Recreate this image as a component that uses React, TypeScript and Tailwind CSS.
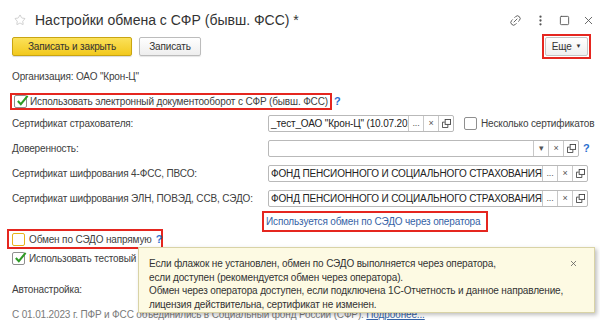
import React from "react";
import { Star, Link2, EllipsisVertical, Square, X } from "lucide-react";

const font = { fontFamily: '"Liberation Sans", Arial, sans-serif' };

const Check = ({ checked, focus }: { checked?: boolean; focus?: boolean }) => (
  <span
    className={`relative inline-flex h-[13px] w-[13px] shrink-0 items-center justify-center rounded-[2px] border bg-white ${
      focus ? "border-[#e8b21a]" : "border-[#8f8f8f]"
    }`}
  >
    {checked && (
      <svg viewBox="0 0 14 14" className="absolute -top-[2px] left-[1px] h-[13px] w-[13px]">
        <path d="M2 7.5 L5.2 11 L12.5 2" fill="none" stroke="#2e9b25" strokeWidth="2.2" />
      </svg>
    )}
  </span>
);

const OpenIcon = () => (
  <svg viewBox="0 0 10 10" className="h-[9px] w-[9px]">
    <rect x="3.5" y="0.5" width="6" height="5.5" fill="none" stroke="#444" strokeWidth="1" />
    <path d="M0.5 3.5 H3 M0.5 3.5 V9.5 H6.5 V6.5" fill="none" stroke="#444" strokeWidth="1" />
  </svg>
);

const FieldBtn = ({ children }: { children: React.ReactNode }) => (
  <span className="flex h-full w-[15px] shrink-0 items-center justify-center border-l border-[#c8c8c8] text-[9px] text-[#555]">
    {children}
  </span>
);

const Field = ({
  value,
  width,
  kind,
}: {
  value: string;
  width: string;
  kind: "pick" | "drop";
}) => (
  <div className="flex h-[17px] shrink-0 items-stretch overflow-hidden rounded-[2px] border border-[#b9b9b9] bg-white">
    <span className={`${width} shrink-0 overflow-hidden whitespace-nowrap px-[2px] text-[10px] leading-[15px] text-[#222]`}>
      {value}
    </span>
    <FieldBtn>{kind === "pick" ? "..." : "▾"}</FieldBtn>
    <FieldBtn>×</FieldBtn>
    <FieldBtn>
      <OpenIcon />
    </FieldBtn>
  </div>
);

const Help = () => <span className="text-[11px] font-bold text-[#2a6fcf]">?</span>;

export default function App() {
  return (
    <div
      className="relative h-[328px] w-[600px] overflow-hidden bg-white text-[10px] tracking-[-0.15px] text-[#404040]"
      style={font}
    >
      {/* header */}
      <div className="flex h-[37px] items-center pt-[3px]">
        <Star className="ml-[14px] h-[12px] w-[12px] text-[#b8b8b8]" strokeWidth={1.3} />
        <span className="ml-[9px] whitespace-nowrap text-[14px] tracking-normal text-[#333]">
          Настройки обмена с СФР (бывш. ФСС) *
        </span>
        <div className="ml-auto mr-[5px] flex items-center gap-[12px] text-[#555]">
          <Link2 className="h-[13px] w-[13px] -rotate-45" strokeWidth={1.6} />
          <EllipsisVertical className="h-[13px] w-[13px]" strokeWidth={2.2} />
          <Square className="h-[11px] w-[11px]" strokeWidth={2} />
          <X className="h-[13px] w-[13px]" strokeWidth={1.6} />
        </div>
      </div>

      {/* command bar */}
      <div className="flex h-[19px] items-center">
        <button className="ml-[12px] h-[19px] w-[120px] rounded-[2px] border border-[#c9a512] bg-[linear-gradient(#fbe15a,#f2c91d)] text-[10px] text-[#333] shadow-[0_1px_1px_rgba(0,0,0,0.15)]">
          Записать и закрыть
        </button>
        <button className="ml-[7px] h-[19px] w-[62px] rounded-[2px] border border-[#bcbcbc] bg-[linear-gradient(#ffffff,#eeeeee)] text-[10px] text-[#333] shadow-[0_1px_1px_rgba(0,0,0,0.1)]">
          Записать
        </button>
        <div className="ml-auto mr-[9px] -my-[3px] border-2 border-[#e5261f] p-[1px]">
          <button className="flex h-[19px] w-[43px] items-center justify-center gap-[4px] rounded-[2px] border border-[#c4c4c4] bg-[linear-gradient(#ffffff,#efefef)] text-[10px] text-[#333]">
            Еще <span className="text-[6px]">▼</span>
          </button>
        </div>
      </div>

      {/* organisation */}
      <div className="flex h-[37px] items-center pl-[12px] pt-[3px]">Организация: ОАО "Крон-Ц"</div>

      {/* main checkbox */}
      <div className="flex h-[17px] items-center">
        <div className="ml-[10px] flex h-[17px] items-center gap-[3px] border-2 border-[#e5261f] pl-[2px] pr-[2px]">
          <Check checked />
          <span className="whitespace-nowrap">Использовать электронный документооборот с СФР (бывш. ФСС)</span>
        </div>
        <span className="ml-[2px]">
          <Help />
        </span>
      </div>

      {/* form */}
      <div className="mt-[1px] grid grid-cols-[256px_1fr] pl-[12px]">
        <div className="flex h-[25px] items-center whitespace-nowrap">Сертификат страхователя:</div>
        <div className="flex h-[25px] items-center">
          <Field value={'_тест_ОАО "Крон-Ц" (10.07.2023)'} width="w-[139px]" kind="pick" />
          <span className="ml-[10px] flex items-center gap-[4px]">
            <Check />
            <span className="whitespace-nowrap">Несколько сертификатов</span>
          </span>
        </div>

        <div className="flex h-[25px] items-center whitespace-nowrap">Доверенность:</div>
        <div className="flex h-[25px] items-center">
          <Field value="" width="w-[264px]" kind="drop" />
          <span className="ml-[4px]">
            <Help />
          </span>
        </div>

        <div className="flex h-[25px] items-center whitespace-nowrap">Сертификат шифрования 4-ФСС, ПВСО:</div>
        <div className="flex h-[25px] items-center">
          <Field value="ФОНД ПЕНСИОННОГО И СОЦИАЛЬНОГО СТРАХОВАНИЯ РОССИЙСКОЙ ФЕДЕРАЦИИ" width="w-[273px]" kind="pick" />
        </div>

        <div className="flex h-[25px] items-center whitespace-nowrap">Сертификат шифрования ЭЛН, ПОВЭД, ССВ, СЭДО:</div>
        <div className="flex h-[25px] items-center">
          <Field value="ФОНД ПЕНСИОННОГО И СОЦИАЛЬНОГО СТРАХОВАНИЯ РОССИЙСКОЙ ФЕДЕРАЦИИ" width="w-[273px]" kind="pick" />
        </div>
      </div>

      {/* operator link */}
      <div className="ml-[262px] flex h-[21px] w-[226px] items-center whitespace-nowrap border-2 border-[#e5261f] pl-[2px] text-[#3562a6]">
        Используется обмен по СЭДО через оператора
      </div>

      {/* direct exchange */}
      <div className="ml-[7px] -mt-[3px] flex h-[20px] w-[156px] items-center gap-[4px] border-2 border-[#e5261f] pl-[3px]">
        <Check focus />
        <span className="whitespace-nowrap">Обмен по СЭДО напрямую</span>
        <Help />
      </div>

      <div className="flex h-[18px] items-center gap-[4px] pl-[12px]">
        <Check checked />
        <span className="whitespace-nowrap">Использовать тестовый сервер СФР</span>
      </div>

      <div className="flex h-[45px] items-center pl-[12px]">Автонастройка:</div>

      <div className="flex h-[4px] items-center whitespace-nowrap pl-[12px] text-[#7a7a7a]">
        С 01.01.2023 г. ПФР и ФСС объединились в Социальный фонд России (СФР).&nbsp;
        <span className="text-[#3562a6] underline">Подробнее...</span>
      </div>

      {/* tooltip */}
      <div className="absolute left-[138px] top-[247px] h-[66px] w-[457px] whitespace-nowrap border border-[#d9d3a6] bg-[#fdfae3] pl-[10px] pt-[9px] leading-[13.5px] text-[#333] shadow-[2px_2px_4px_rgba(0,0,0,0.25)]">
        <div>Если флажок не установлен, обмен по СЭДО выполняется через оператора,</div>
        <div>если доступен (рекомендуется обмен через оператора).</div>
        <div>Обмен через оператора доступен, если подключена 1С-Отчетность и данное направление,</div>
        <div>лицензия действительна, сертификат не изменен.</div>
        <X className="absolute right-[16px] top-[11px] h-[9px] w-[9px] text-[#555]" strokeWidth={2} />
      </div>
    </div>
  );
}
